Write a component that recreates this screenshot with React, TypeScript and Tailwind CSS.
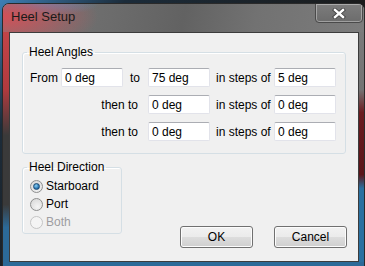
import React from 'react';

const font = "font-['Liberation_Sans',Arial,sans-serif]";

function TextBox({ value }: { value: string }) {
  return (
    <div className="h-[19px] bg-white border border-[#e2e3ea] border-t-[#abadb3] rounded-[2px] px-[3px] flex items-center text-[12px] text-black">
      {value}
    </div>
  );
}

function Radio({ label, checked, disabled }: { label: string; checked?: boolean; disabled?: boolean }) {
  return (
    <div className="h-[18px] flex items-center gap-[3px]">
      <span
        className={`w-[13px] h-[13px] rounded-full border flex items-center justify-center ${
          disabled
            ? 'border-[#c5c5c5] bg-[#f4f4f4]'
            : 'border-[#8e8f8f] bg-[radial-gradient(circle_at_60%_70%,#f4f4f4,#d4d4d4)]'
        }`}
      >
        {checked && (
          <span className="w-[7px] h-[7px] rounded-full bg-[radial-gradient(circle_at_40%_35%,#8ad0f5,#1e6aa8_70%,#0d3b66)] border border-[#1b4a73]" />
        )}
      </span>
      <span className={`text-[12px] ${disabled ? 'text-[#9d9da1]' : 'text-black'}`}>{label}</span>
    </div>
  );
}

function Button({ label }: { label: string }) {
  return (
    <button className="w-[73px] h-[22px] rounded-[3px] border border-[#707070] bg-[linear-gradient(to_bottom,#f2f2f2_0%,#ebebeb_50%,#dddddd_50%,#cfcfcf_100%)] shadow-[inset_0_0_0_1px_#fcfcfc] text-[12px] text-black">
      {label}
    </button>
  );
}

export default function App() {
  const steps = [
    { from: '0 deg', to: '75 deg', step: '5 deg' },
    { to: '0 deg', step: '0 deg' },
    { to: '0 deg', step: '0 deg' },
  ];

  return (
    <div className={`w-[365px] h-[266px] overflow-hidden bg-[linear-gradient(135deg,#3d7fb5_0%,#1c2c3a_20%,#1a1a1a_60%)] pl-[2px] pt-[3px] ${font}`}>
      <div className="w-[363px] h-[275px] flex flex-col rounded-t-[7px] border border-[#2a2a2a] shadow-[inset_0_0_0_1px_rgba(255,255,255,0.35)] overflow-hidden bg-[#6f6f6f]">
        {/* caption */}
        <div className="h-[28px] shrink-0 flex items-start bg-[radial-gradient(ellipse_95px_38px_at_0%_45%,rgba(214,78,86,0.95),rgba(214,78,86,0)_100%),radial-gradient(ellipse_60px_12px_at_10%_0%,rgba(80,150,210,0.8),rgba(80,150,210,0)_100%),linear-gradient(100deg,#777_0%,#6c6c6c_30%,#626262_50%,#727272_70%,#7c7c7c_100%)]">
          <span className="ml-[8px] mt-[4px] text-[13px] leading-[17px] text-[#1a1a1a]">Heel Setup</span>
          <div className="ml-auto mr-[1px] -mt-px w-[48px] h-[20px] rounded-b-[4px] border border-[#4a4a4a] shadow-[inset_0_0_0_1px_rgba(255,255,255,0.35)] bg-[linear-gradient(to_bottom,#7c7c7c,#6c6c6c)] flex items-center justify-center">
            <svg width="14" height="11" viewBox="0 0 14 11">
              <path d="M3 2 L11 9 M11 2 L3 9" stroke="#444" strokeWidth="4.2" strokeLinecap="square" />
              <path d="M3 2 L11 9 M11 2 L3 9" stroke="#fff" strokeWidth="2.4" strokeLinecap="square" />
            </svg>
          </div>
        </div>

        <div className="flex h-[230px] shrink-0">
          <div className="w-[6px] bg-[linear-gradient(to_bottom,#c24448_0%,#b03a3e_25%,#3a3a3a_45%,#3a3a3a_75%,#2c6a98_85%,#2c6a98_100%)]" />
          {/* client */}
          <div className="w-[350px] bg-[#f0f0f0] border border-[#3c3c3c] px-[12px] pt-[12px] flex flex-col text-black">
            <fieldset className="border border-[#d5dfe5] rounded-[3px] shadow-[inset_1px_1px_0_#fff] pl-[7px] pr-[9px] pt-[9px] pb-[12px]">
              <legend className="-ml-[3px] px-[2px] text-[12px] leading-[14px]">Heel Angles</legend>
              <div className="grid grid-cols-[31px_62px_25px_62px_64px_62px] gap-y-[8px] text-[12px] items-center">
                {steps.map((r, i) => (
                  <React.Fragment key={i}>
                    {r.from ? (
                      <>
                        <span>From</span>
                        <TextBox value={r.from} />
                        <span className="pl-[7px]">to</span>
                      </>
                    ) : (
                      <span className="col-span-3 text-right pr-[10px]">then to</span>
                    )}
                    <TextBox value={r.to} />
                    <span className="pl-[6px]">in steps of</span>
                    <TextBox value={r.step} />
                  </React.Fragment>
                ))}
              </div>
            </fieldset>

            <div className="flex items-start mt-[6px]">
              <fieldset className="w-[100px] border border-[#d5dfe5] rounded-[3px] shadow-[inset_1px_1px_0_#fff] pl-[7px] pt-[3px] pb-[2px]">
                <legend className="-ml-[3px] px-[2px] text-[12px] leading-[14px]">Heel Direction</legend>
                <Radio label="Starboard" checked />
                <Radio label="Port" />
                <Radio label="Both" disabled />
              </fieldset>
              <div className="ml-auto mt-[66px] flex gap-[21px] -mr-px">
                <Button label="OK" />
                <Button label="Cancel" />
              </div>
            </div>
          </div>
          <div className="flex-1 bg-[linear-gradient(to_bottom,#7a7a7a_0%,#747474_25%,#6a1c20_35%,#5a1519_62%,#2a70a0_68%,#2a70a0_100%)]" />
        </div>
        <div className="flex-1 bg-[#2c6a98]" />
      </div>
    </div>
  );
}
